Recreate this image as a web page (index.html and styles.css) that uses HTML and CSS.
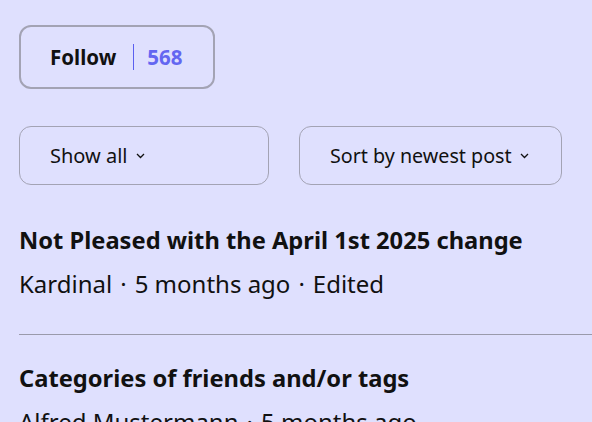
FILE: index.html
```html
<!DOCTYPE html>
<html>
<head>
<meta charset="utf-8">
<link rel="stylesheet" href="styles.css">
</head>
<body>
<div class="page">
  <div class="follow">
    <span class="follow-label">Follow</span>
    <span class="follow-sep"></span>
    <span class="follow-count">568</span>
  </div>
  <div class="filters">
    <div class="select select-show"><span>Show all</span><svg class="chev" width="9" height="6" viewBox="0 0 9 6"><path d="M1 1l3.5 3.5L8 1" fill="none" stroke="#111" stroke-width="1.3"/></svg></div>
    <div class="select select-sort"><span>Sort by newest post</span><svg class="chev" width="9" height="6" viewBox="0 0 9 6"><path d="M1 1l3.5 3.5L8 1" fill="none" stroke="#111" stroke-width="1.3"/></svg></div>
  </div>
  <div class="post">
    <div class="post-title">Not Pleased with the April 1st 2025 change</div>
    <div class="post-meta">Kardinal<span class="dot">·</span>5 months ago<span class="dot">·</span>Edited</div>
  </div>
  <div class="post post-bordered">
    <div class="post-title">Categories of friends and/or tags</div>
    <div class="post-meta">Alfred Mustermann<span class="dot">·</span>5 months ago</div>
  </div>
</div>
</body>
</html>
```
FILE: styles.css
```css
html, body {
  margin: 0;
  padding: 0;
  background: #dfe0fe;
  overflow: hidden;
}
body {
  font-family: "Noto Sans", sans-serif;
  color: #111;
}
.page {
  padding: 25px 0 0 19px;
}
.follow {
  display: inline-flex;
  align-items: center;
  box-sizing: border-box;
  width: 196px;
  height: 64px;
  border: 2px solid #a3a3b4;
  border-radius: 12px;
  padding-left: 29px;
}
.follow-label {
  font-weight: 700;
  font-size: 20.5px;
}
.follow-sep {
  width: 1px;
  height: 26px;
  background: #5b5ff0;
  margin: 0 13px 0 17px;
}
.follow-count {
  font-weight: 700;
  font-size: 20.5px;
  color: #6366f1;
}
.filters {
  display: flex;
  gap: 30px;
  margin-top: 37px;
}
.select {
  box-sizing: border-box;
  height: 59px;
  border: 1px solid #a3a3b4;
  border-radius: 12px;
  display: flex;
  align-items: center;
  padding-left: 30px;
  font-size: 20px;
}
.select-show { width: 250px; }
.select-sort { width: 263px; font-size: 19.7px; }
.chev { margin-left: 8px; }
.post {
  padding-top: 40px;
}
.post-title {
  font-weight: 700;
  font-size: 23.7px;
  line-height: 30px;
}
.post-meta {
  font-size: 24px;
  line-height: 30px;
  margin-top: 14px;
}
.dot { margin: 0 8px; }
.post-bordered {
  border-top: 1px solid #9a9aab;
  margin-top: 35px;
  padding-top: 28px;
}
```
